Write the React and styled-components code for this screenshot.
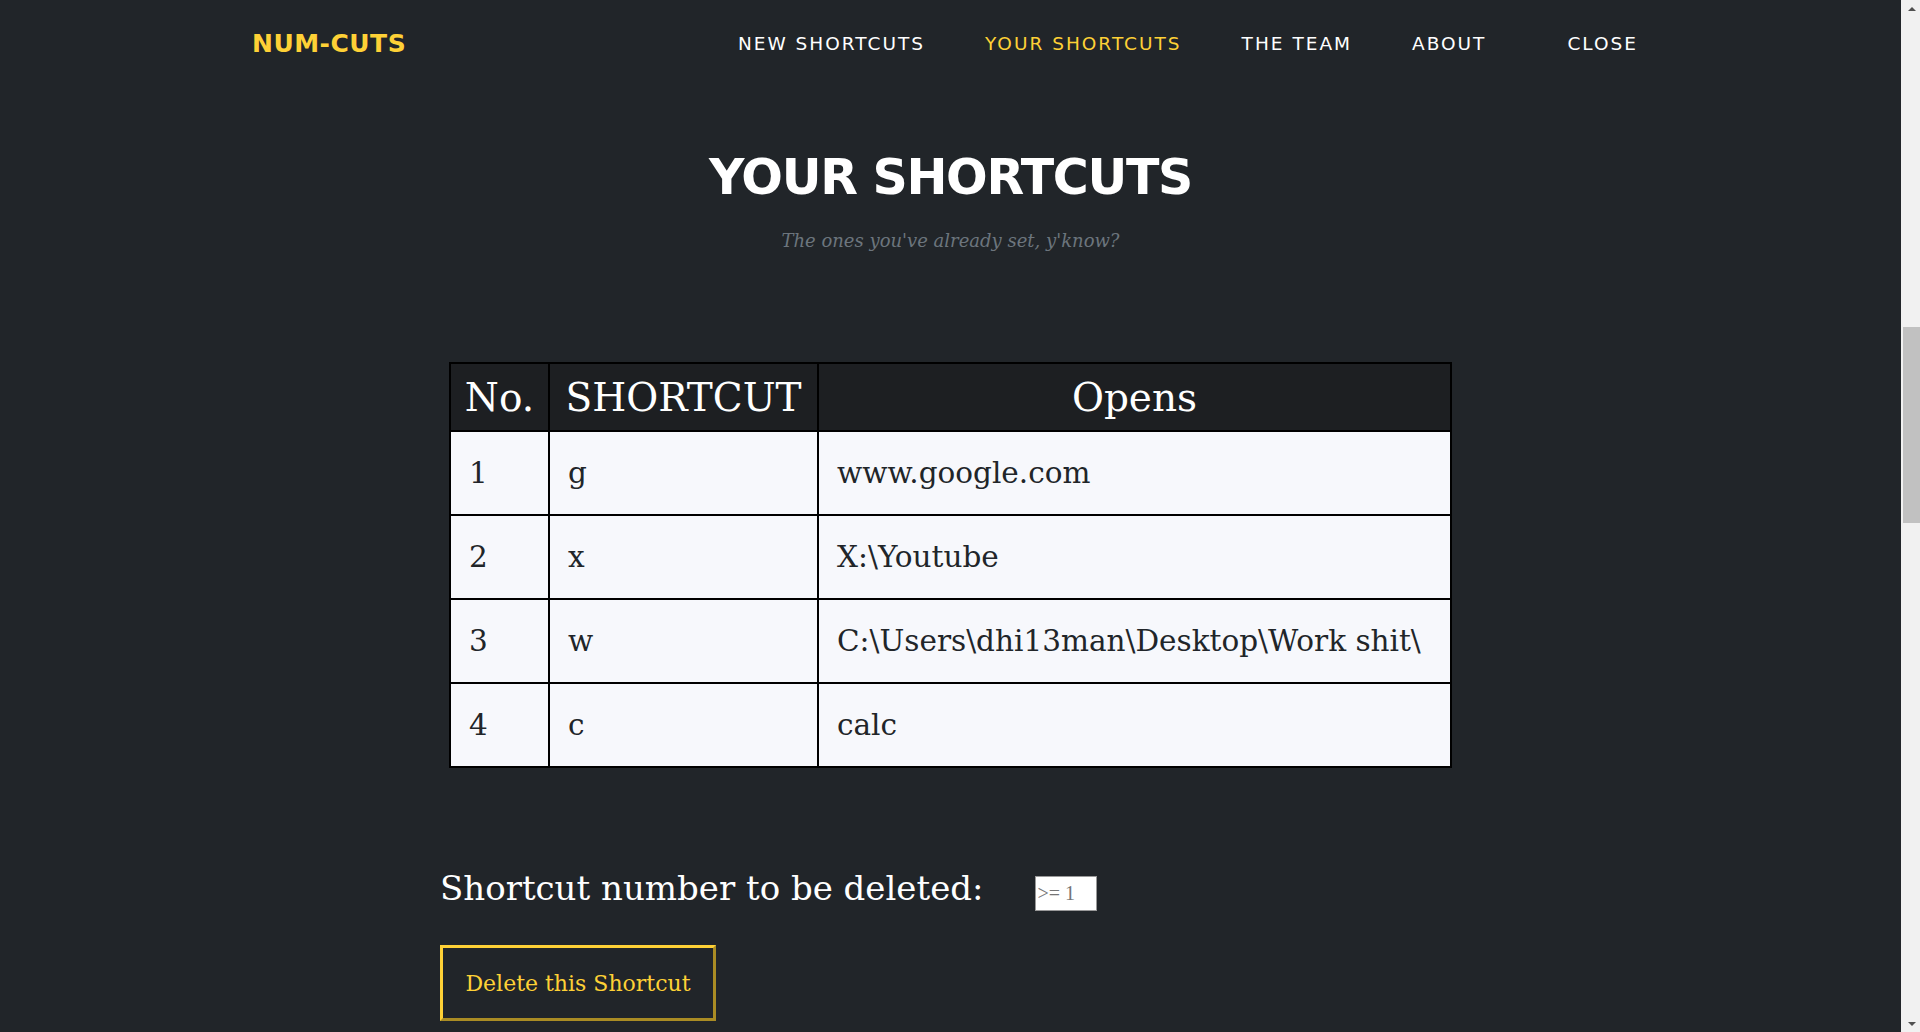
import { useLayoutEffect, useRef, useState } from "react";
import styled, { createGlobalStyle } from "styled-components";

const Yellow = "#fed136";
const Dark = "#212529";

const GlobalStyle = createGlobalStyle`
  body {
    margin: 0;
    background: ${Dark};
    font-family: "DejaVu Serif", "Liberation Serif", serif;
  }
`;

const Screen = styled.div`
  display: flex;
  height: 100vh;
  overflow: hidden;
  background: ${Dark};
`;

const Main = styled.div`
  flex: 1;
  min-width: 0;
  display: flex;
  flex-direction: column;
`;

const Scroller = styled.main`
  flex: 1;
  overflow-y: auto;
  overflow-x: hidden;
  scrollbar-width: none;
  &::-webkit-scrollbar {
    display: none;
  }
`;

const Content = styled.div`
  min-height: 4817px;
`;

/* fake browser scrollbar, the page is scrolled down to the second section */
const Rail = styled.div`
  width: 19px;
  flex-shrink: 0;
  display: flex;
  flex-direction: column;
  background: #f1f1f1;
`;

const Arrow = styled.div`
  height: 17px;
  display: flex;
  align-items: center;
  justify-content: center;
  padding-left: 2px;
  &::after {
    content: "";
    border-left: 4px solid transparent;
    border-right: 4px solid transparent;
    ${(p) =>
      p.$down
        ? "border-top: 4px solid #505050;"
        : "border-bottom: 4px solid #505050;"}
  }
`;

const Track = styled.div`
  flex: 1;
  position: relative;
`;

const Thumb = styled.div`
  position: absolute;
  left: 2px;
  right: 0;
  background: #c1c1c1;
`;

const Nav = styled.nav`
  height: 86px;
  flex-shrink: 0;
  background: ${Dark};
  display: flex;
  justify-content: center;
`;

const NavInner = styled.div`
  width: 1397px;
  display: flex;
  align-items: center;
  justify-content: space-between;
`;

const Brand = styled.a`
  font-family: "DejaVu Sans", "Open Sans", sans-serif;
  font-weight: 700;
  font-size: 25px;
  letter-spacing: 0.5px;
  color: ${Yellow};
  text-decoration: none;
`;

const NavLinks = styled.ul`
  display: flex;
  align-items: center;
  list-style: none;
  margin: 0;
  padding: 0 11px 0 0;
`;

const NavLink = styled.li`
  margin-left: ${(p) => (p.$space === undefined ? 60 : p.$space)}px;
  font-family: "DejaVu Sans", "Open Sans", sans-serif;
  font-size: 18.5px;
  letter-spacing: 2px;
  text-transform: uppercase;
  color: ${(p) => (p.$active ? Yellow : "#fff")};
  cursor: pointer;
`;

const Section = styled.section`
  min-height: ${(p) => p.$min || 0}px;
  display: flex;
  flex-direction: column;
  align-items: center;
  padding-top: ${(p) => p.$top || 0}px;
`;

const Heading = styled.h2`
  margin: 0;
  font-family: "DejaVu Sans", "Open Sans", sans-serif;
  font-weight: 700;
  font-size: 49px;
  letter-spacing: -1.3px;
  line-height: 60px;
  color: #fff;
  text-transform: uppercase;
`;

const Subheading = styled.h3`
  margin: 21px 0 0;
  font-family: "DejaVu Serif", serif;
  font-style: italic;
  font-weight: 400;
  font-size: 18px;
  line-height: 24px;
  color: #6c757d;
`;

const Table = styled.table`
  margin-top: 109px;
  width: 995px;
  border-collapse: collapse;
  table-layout: fixed;
  border: 2px solid #000;
`;

const HeadCell = styled.th`
  width: ${(p) => p.$w}px;
  height: 66px;
  padding: 0;
  background: #1d1f22;
  border: 2px solid #000;
  color: #fff;
  font-weight: 400;
  font-size: 39px;
  text-align: center;
`;

const Cell = styled.td`
  height: 82px;
  padding: 0 18px;
  background: #f7f8fc;
  border: 2px solid #000;
  color: #212529;
  font-size: 29.5px;
  white-space: nowrap;
  overflow: hidden;
`;

const Form = styled.div`
  width: 1021px;
  margin-top: 98px;
  display: flex;
  flex-direction: column;
  align-items: flex-start;
  gap: 34px;
`;

const FieldRow = styled.label`
  display: flex;
  align-items: center;
  gap: 51px;
`;

const FieldLabel = styled.span`
  font-size: 34px;
  line-height: 43px;
  color: #fff;
`;

const NumberInput = styled.input`
  box-sizing: border-box;
  width: 62px;
  height: 35px;
  margin-top: 10px;
  padding: 0 2px;
  border: 1px solid #999;
  background: #fff;
  font-family: "Liberation Serif", serif;
  font-size: 20px;
  color: #212529;
  outline: none;
  &::placeholder {
    color: #757575;
  }
`;

const DeleteButton = styled.button`
  box-sizing: border-box;
  width: 276px;
  height: 76px;
  background: transparent;
  border: 3px outset ${Yellow};
  color: ${Yellow};
  font-family: "DejaVu Serif", serif;
  font-size: 22px;
  cursor: pointer;
`;

const shortcuts = [
  { no: 1, key: "g", opens: "www.google.com" },
  { no: 2, key: "x", opens: "X:\\Youtube" },
  { no: 3, key: "w", opens: "C:\\Users\\dhi13man\\Desktop\\Work shit\\" },
  { no: 4, key: "c", opens: "calc" },
];

export default function App() {
  const scrollRef = useRef(null);
  const sectionRef = useRef(null);
  const trackRef = useRef(null);
  const [thumb, setThumb] = useState({ top: 0, height: 0 });

  useLayoutEffect(() => {
    const el = scrollRef.current;
    el.scrollTop = sectionRef.current.offsetTop - el.offsetTop;
    const track = trackRef.current.clientHeight;
    const height = (track * el.clientHeight) / el.scrollHeight;
    const top =
      (el.scrollTop / (el.scrollHeight - el.clientHeight)) * (track - height);
    setThumb({ top, height });
  }, []);

  return (
    <Screen>
      <GlobalStyle />
      <Main>
        <Nav>
          <NavInner>
            <Brand href="#">NUM-CUTS</Brand>
            <NavLinks>
              <NavLink $space={0}>New Shortcuts</NavLink>
              <NavLink $active>Your Shortcuts</NavLink>
              <NavLink>The Team</NavLink>
              <NavLink>About</NavLink>
              <NavLink $space={81}>Close</NavLink>
            </NavLinks>
          </NavInner>
        </Nav>
        <Scroller ref={scrollRef}>
          <Content>
            <Section id="new" $min={1496} />
            <Section id="yours" ref={sectionRef} $top={62}>
              <Heading>Your Shortcuts</Heading>
              <Subheading>The ones you've already set, y'know?</Subheading>
              <Table>
                <thead>
                  <tr>
                    <HeadCell $w={97}>No.</HeadCell>
                    <HeadCell $w={267}>SHORTCUT</HeadCell>
                    <HeadCell $w={631}>Opens</HeadCell>
                  </tr>
                </thead>
                <tbody>
                  {shortcuts.map((s) => (
                    <tr key={s.no}>
                      <Cell>{s.no}</Cell>
                      <Cell>{s.key}</Cell>
                      <Cell>{s.opens}</Cell>
                    </tr>
                  ))}
                </tbody>
              </Table>
              <Form>
                <FieldRow>
                  <FieldLabel>Shortcut number to be deleted:</FieldLabel>
                  <NumberInput type="number" min="1" placeholder=">= 1" />
                </FieldRow>
                <DeleteButton>Delete this Shortcut</DeleteButton>
              </Form>
            </Section>
          </Content>
        </Scroller>
      </Main>
      <Rail>
        <Arrow />
        <Track ref={trackRef}>
          <Thumb style={{ top: thumb.top, height: thumb.height }} />
        </Track>
        <Arrow $down />
      </Rail>
    </Screen>
  );
}
